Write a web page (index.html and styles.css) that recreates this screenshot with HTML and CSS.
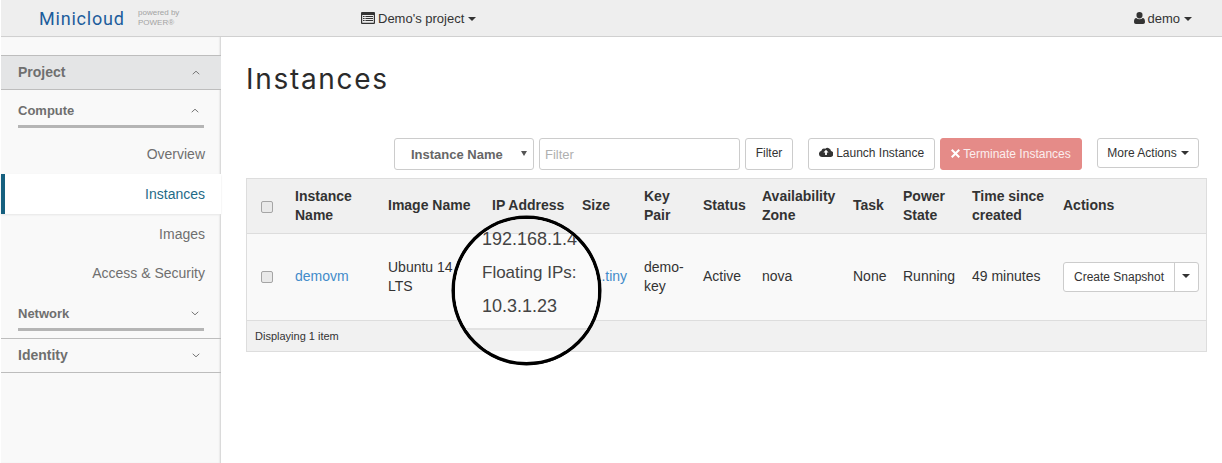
FILE: index.html
```html
<!DOCTYPE html>
<html lang="en">
<head>
<meta charset="utf-8">
<title>Instances</title>
<link rel="stylesheet" href="styles.css">
</head>
<body>
<header class="topbar">
  <div class="brand">
    <span class="logo">Minicloud</span>
    <span class="powered">powered by<br>POWER®</span>
  </div>
  <div class="project">
    <svg class="ico-list" viewBox="0 0 14 12"><path fill-rule="evenodd" d="M1 0h12a1 1 0 0 1 1 1v10a1 1 0 0 1-1 1H1a1 1 0 0 1-1-1V1a1 1 0 0 1 1-1zm.2 3v7.8h11.6V3zM2 4h1.6v1H2zm2.4 0H12v1H4.400zM2 6h1.600v1H2zm2.400 0H12v1H4.400zM2 8h1.600v1H2zm2.400 0H12v1H4.400z"/></svg>
    <span>Demo's project</span><i class="caret"></i>
  </div>
  <div class="user">
    <svg class="ico-user" viewBox="0 0 11 12"><path d="M5.500 0a3 3 0 0 1 3 3.200 3 3 0 0 1-3 3.200 3 3 0 0 1-3-3.200 3 3 0 0 1 3-3.200zM2.300 6c.8.800 1.900 1.200 3.200 1.200S7.900 6.800 8.700 6c1.500.1 2.300 1.500 2.300 4 0 1.300-.8 2-1.900 2H1.900C.8 12 0 11.300 0 10c0-2.500.8-3.900 2.300-4z"/></svg>
    <span>demo</span><i class="caret"></i>
  </div>
</header>
<div class="shell">
  <nav class="sidebar">
    <div class="dash dash-open">
      <span>Project</span>
      <svg class="chev" viewBox="0 0 8 5"><path d="M.7 4.200 4 1.200l3.300 3"/></svg>
    </div>
    <div class="panel">
      <div class="group">
        <span>Compute</span>
        <svg class="chev" viewBox="0 0 8 5"><path d="M.7 4.200 4 1.200l3.300 3"/></svg>
      </div>
      <div class="items">
        <a class="item">Overview</a>
        <a class="item item-active">Instances</a>
        <a class="item">Images</a>
        <a class="item item-short">Access &amp; Security</a>
      </div>
      <div class="group group-net">
        <span>Network</span>
        <svg class="chev" viewBox="0 0 8 5"><path d="M.7.800 4 3.800l3.300-3"/></svg>
      </div>
    </div>
    <div class="dash dash-closed">
      <span>Identity</span>
      <svg class="chev" viewBox="0 0 8 5"><path d="M.7.800 4 3.800l3.300-3"/></svg>
    </div>
  </nav>
  <main class="content">
    <h1 class="title">Instances</h1>
    <div class="toolbar">
      <div class="select"><span>Instance Name</span><em class="arrow"></em></div>
      <div class="input">Filter</div>
      <button class="btn btn-filter">Filter</button>
      <button class="btn btn-launch">
        <svg class="ico-cloud" viewBox="0 0 14 10"><path fill-rule="evenodd" d="M3.200 10A3.200 3.200 0 0 1 2.400 3.700 3 3 0 0 1 6.300 1.700 3.500 3.500 0 0 1 12 3.900 3.100 3.100 0 0 1 11 10zM7 2.800 4.500 5.500h1.600V8h1.800V5.500h1.600z"/></svg>
        Launch Instance
      </button>
      <button class="btn btn-danger">
        <svg class="ico-x" viewBox="0 0 8 8"><path d="M1.300 0 4 2.700 6.700 0 8 1.300 5.300 4 8 6.700 6.700 8 4 5.300 1.300 8 0 6.700 2.700 4 0 1.300z"/></svg>
        Terminate Instances
      </button>
      <button class="btn btn-more">More Actions<i class="caret"></i></button>
    </div>
    <div class="table-wrap">
      <table class="grid">
        <colgroup>
          <col class="c1"><col class="c2"><col class="c3"><col class="c4"><col class="c5"><col class="c6"><col class="c7"><col class="c8"><col class="c9"><col class="c10"><col class="c11"><col class="c12">
        </colgroup>
        <thead>
          <tr>
            <th class="check"><span class="box"></span></th>
            <th>Instance Name</th>
            <th>Image Name</th>
            <th>IP Address</th>
            <th>Size</th>
            <th>Key Pair</th>
            <th>Status</th>
            <th>Availability Zone</th>
            <th>Task</th>
            <th>Power State</th>
            <th>Time since created</th>
            <th>Actions</th>
          </tr>
        </thead>
        <tbody>
          <tr>
            <td class="check"><span class="box"></span></td>
            <td><a class="link">demovm</a></td>
            <td>Ubuntu 14 LTS</td>
            <td></td>
            <td><a class="link">m1.tiny</a></td>
            <td>demo-key</td>
            <td>Active</td>
            <td>nova</td>
            <td>None</td>
            <td>Running</td>
            <td>49 minutes</td>
            <td>
              <div class="split">
                <span class="split-main">Create Snapshot</span>
                <span class="split-caret"><i class="caret"></i></span>
              </div>
            </td>
          </tr>
        </tbody>
        <tfoot>
          <tr><td colspan="12">Displaying 1 item</td></tr>
        </tfoot>
      </table>
    </div>
    <div class="lens">
      <div class="lens-head"></div>
      <div class="lens-row">
        <div class="lens-line">192.168.1.4</div>
        <div class="lens-line lens-small">Floating IPs:</div>
        <div class="lens-line lens-last">10.3.1.23</div>
      </div>
      <div class="lens-foot"></div>
    </div>
  </main>
</div>
</body>
</html>
```
FILE: styles.css
```css
* { box-sizing: border-box; }
html, body { margin: 0; padding: 0; height: 100%; overflow: hidden; }
body {
  background: #fff;
  color: #333;
  font-family: "Liberation Sans", Arial, sans-serif;
  font-size: 14px;
  line-height: 19px;
  display: flex;
  flex-direction: column;
}
.caret {
  display: inline-block;
  width: 0;
  height: 0;
  border-top: 4px solid currentColor;
  border-left: 4px solid transparent;
  border-right: 4px solid transparent;
  margin-left: 4px;
  vertical-align: 2px;
}
.topbar {
  height: 37px;
  flex: none;
  margin-left: 1px;
  background: #eeeeee;
  border-bottom: 1px solid #d0d0d0;
  display: flex;
  align-items: center;
  font-size: 13px;
}
.brand { display: flex; align-items: center; width: 360px; padding-left: 38px; }
.logo {
  font-family: "Roboto", "Liberation Sans", sans-serif;
  font-size: 18px;
  letter-spacing: 0.800px;
  color: #1c5d9c;
  width: 99px;
  flex: none;
}
.powered { font-size: 8px; line-height: 10px; color: #a3a3a3; }
.project { display: flex; align-items: center; }
.ico-list { width: 14px; height: 12px; margin-right: 3px; fill: #333; }
.user { margin-left: auto; margin-right: 30px; display: flex; align-items: center; }
.ico-user { width: 11px; height: 12px; margin-right: 2px; fill: #333; }
.topbar .caret { margin-top: 1px; }
.shell { flex: 1; display: flex; min-height: 0; }
.sidebar {
  width: 220px;
  flex: none;
  margin-left: 1px;
  background: #f9f9f9;
  box-shadow: inset -2px 0 2px -1px #cfcfcf;
  padding-top: 18px;
  color: #6f6f6f;
}
.dash {
  display: flex;
  align-items: center;
  justify-content: space-between;
  padding: 0 21px 0 17px;
  font-weight: bold;
  font-size: 14px;
  border-bottom: 1px solid #bdbdbd;
}
.dash-open {
  height: 35px;
  background: #e4e5e6;
  border-top: 1px solid #bdbdbd;
}
.dash-closed { height: 34px; }
.chev { width: 8px; height: 5px; fill: none; stroke: #777; stroke-width: 1; }
.panel { border-bottom: 1px solid #bdbdbd; height: 249px; }
.group {
  display: flex;
  align-items: center;
  justify-content: space-between;
  height: 38px;
  margin: 0 17px 0 17px;
  padding: 5px 5px 0 0;
  font-weight: bold;
  font-size: 13px;
  border-bottom: 3px solid #b5b5b5;
}
.items { padding-top: 6px; }
.group-net { margin-top: 1px; padding-top: 6px; }
.item {
  display: block;
  height: 40px;
  line-height: 40px;
  padding-right: 16px;
  text-align: right;
  font-size: 14px;
}
.item-short { height: 38px; line-height: 38px; }
.item-active {
  background: #fff;
  color: #1f6a87;
  border-left: 4px solid #16607f;
  box-shadow: 0 1px 2px #e6e6e6;
  position: relative;
}
.content { flex: 1; position: relative; padding: 0 15px 0 25px; min-width: 0; }
.title {
  margin: 26px 0 43px;
  font-family: "Inter", "Liberation Sans", sans-serif;
  font-weight: 400;
  font-size: 28px;
  line-height: 32px;
  letter-spacing: 1.700px;
  color: #2b2b2b;
}
.toolbar {
  display: flex;
  align-items: flex-start;
  margin-left: 148px;
  margin-right: 8px;
  height: 40px;
  font-size: 12px;
}
.select {
  width: 140px;
  height: 32px;
  border: 1px solid #ccc;
  border-radius: 3px;
  display: flex;
  align-items: center;
  justify-content: space-between;
  padding: 0 6px 0 16px;
  font-weight: bold;
  font-size: 13px;
  color: #666;
}
.arrow {
  width: 0;
  height: 0;
  border-top: 5px solid #555;
  border-left: 3px solid transparent;
  border-right: 3px solid transparent;
  margin-top: -1px;
}
.input {
  width: 201px;
  height: 32px;
  margin-left: 5px;
  border: 1px solid #ccc;
  border-radius: 3px;
  padding-left: 5px;
  line-height: 31px;
  font-size: 13px;
  color: #b0b0b0;
}
.btn {
  height: 32px;
  border: 1px solid #ccc;
  border-radius: 3px;
  background: #fff;
  color: #333;
  font: 12px/1 "Liberation Sans", Arial, sans-serif;
  padding: 0;
  white-space: nowrap;
}
.btn-filter { width: 48px; margin-left: 5px; padding-bottom: 2px; }
.btn-launch { width: 127px; margin-left: 15px; padding-bottom: 3px; }
.ico-cloud { width: 14px; height: 10px; fill: #333; }
.btn-danger {
  width: 142px;
  margin-left: 5px;
  background: #e58b88;
  border-color: #e58b88;
  color: #fbeeee;
}
.ico-x { width: 9px; height: 9px; fill: #fff; }
.btn-more { width: 102px; height: 30px; margin-left: 15px; }
.table-wrap {
  border: 1px solid #dddddd;
  width: 961px;
  background: #f9f9f9;
}
.grid { width: 100%; table-layout: fixed; border-collapse: collapse; }
.c1 { width: 40px; }
.c2 { width: 93px; }
.c3 { width: 104px; }
.c4 { width: 90px; }
.c5 { width: 62px; }
.c6 { width: 59px; }
.c7 { width: 59px; }
.c8 { width: 91px; }
.c9 { width: 50px; }
.c10 { width: 69px; }
.c11 { width: 91px; }
.c12 { width: 151px; }
th {
  background: #f0f0f0;
  height: 54px;
  padding: 0 8px;
  text-align: left;
  vertical-align: middle;
  font-weight: bold;
  border-bottom: 1px solid #ddd;
}
tbody td {
  height: 87px;
  padding: 0 8px;
  vertical-align: middle;
  background: #f9f9f9;
}
tfoot td {
  height: 31px;
  padding: 2px 8px 0;
  font-size: 11px;
  background: #f1f1f1;
  border-top: 1px solid #ddd;
}
.check { text-align: center; padding-left: 0; padding-right: 0; }
.box {
  display: inline-block;
  width: 12px;
  height: 12px;
  vertical-align: middle;
  border: 1px solid #a5a5a5;
  border-radius: 2px;
  background: #e9e9e9;
}
.link { color: #428bca; }
.split {
  display: flex;
  width: 136px;
  height: 30px;
  font-size: 12px;
  background: #fff;
  border: 1px solid #ccc;
  border-radius: 3px;
}
.split-main { flex: 1; text-align: center; line-height: 28px; }
.split-caret {
  width: 24px;
  border-left: 1px solid #ccc;
  padding-right: 2px;
  text-align: center;
  line-height: 26px;
}
.split-caret .caret { margin: 0; vertical-align: middle; }
.lens {
  position: absolute;
  left: 231px;
  top: 179px;
  width: 149px;
  height: 149px;
  border: 3px solid #000;
  box-shadow: 0 0 0 0.500px #000;
  border-radius: 50%;
  overflow: hidden;
  background: #fff;
  display: flex;
  flex-direction: column;
}
.lens-head { height: 15px; flex: none; background: #f0f0f0; border-bottom: 1px solid #ddd; }
.lens-row {
  flex: none;
  height: 96px;
  background: #fafafa;
  border-bottom: 2px solid #e2e2e2;
  padding-left: 27px;
}
.lens-line { font-size: 18px; line-height: 34px; height: 34px; color: #444; white-space: nowrap; }
.lens-line:first-child { margin-top: -12px; }
.lens-small { font-size: 17px; }
.lens-last { margin-top: -1px; }
.lens-foot { height: 21px; flex: none; background: #f1f1f1; }
```
